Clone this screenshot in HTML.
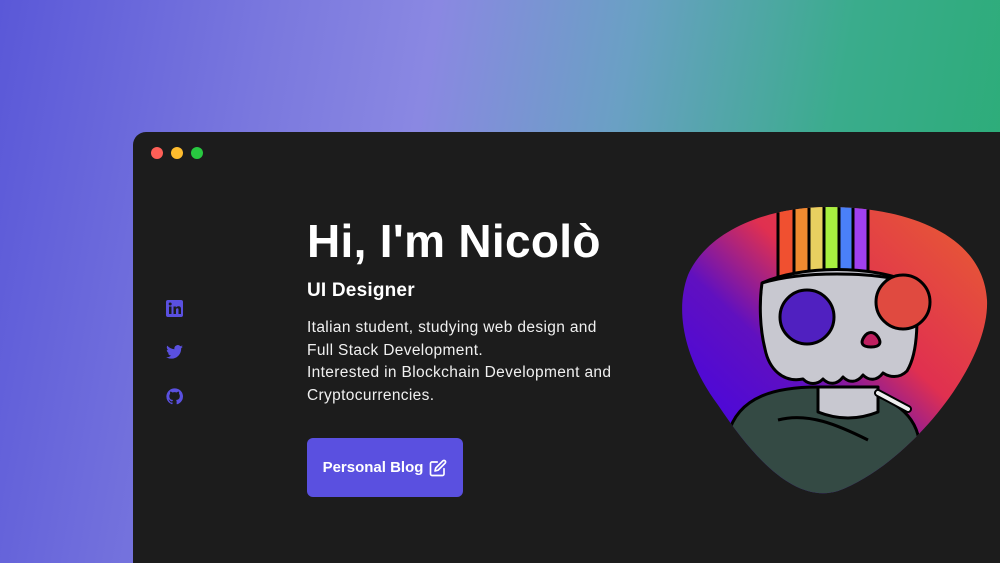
<!DOCTYPE html>
<html><head><meta charset="utf-8"><style>
*{margin:0;padding:0;box-sizing:border-box}
html,body{width:1000px;height:563px;overflow:hidden}
body{position:relative;font-family:"Liberation Sans",sans-serif;
background:linear-gradient(100deg,#5a58d8 0%,#7a78de 25%,#8a88e2 40%,#6aa0c4 58%,#3aac8c 78%,#28ad72 100%);}
.win{position:absolute;left:133px;top:132px;width:880px;height:431px;background:#1c1c1c;border-radius:13px 13px 0 0}
.dot{position:absolute;top:15px;width:12px;height:12px;border-radius:50%}
h1{position:absolute;left:174px;top:82px;color:#fff;font-size:46px;font-weight:700;letter-spacing:0.3px}
h2{position:absolute;left:174px;top:148px;color:#fff;font-size:19px;font-weight:700;letter-spacing:0.2px}
p{position:absolute;left:174px;top:185px;color:#f0f0f0;font-size:15.5px;line-height:22.7px;letter-spacing:0.35px}
.btn{position:absolute;left:174px;top:306px;width:156px;height:59px;background:#5a50e0;border-radius:6px;color:#fff;font-weight:700;font-size:15px;display:flex;align-items:center;justify-content:center;gap:6px}
.ic{position:absolute;left:33px}
</style></head><body>
<div class="win">
<div class="dot" style="left:18px;background:#fe5f57"></div>
<div class="dot" style="left:38px;background:#febc2e"></div>
<div class="dot" style="left:58px;background:#28c840"></div>
<svg class="ic" style="top:168px" width="17" height="17" viewBox="0 0 17 17"><rect width="17" height="17" rx="2" fill="#5a50e0"/><rect x="3" y="6.5" width="2.5" height="7.5" fill="#1c1c1c"/><circle cx="4.2" cy="4" r="1.5" fill="#1c1c1c"/><path d="M7.5 6.5h2.4v1.2c.5-.9 1.5-1.4 2.6-1.4 2 0 2.5 1.3 2.5 3V14h-2.5v-4.2c0-1-.3-1.5-1.1-1.5-.9 0-1.4.6-1.4 1.6V14H7.5z" fill="#1c1c1c"/></svg>
<svg class="ic" style="top:213px" width="17" height="14" viewBox="0 0 24 20"><path d="M24 2.4c-.9.4-1.8.7-2.8.8 1-.6 1.8-1.6 2.200-2.7-1 .6-2 1-3.1 1.2A4.9 4.9 0 0 0 11.9 6 14 14 0 0 1 1.7.9a4.9 4.9 0 0 0 1.5 6.6c-.8 0-1.600-.3-2.2-.6 0 2.4 1.7 4.4 3.9 4.8-.7.2-1.5.2-2.2.1.6 2 2.4 3.4 4.6 3.4A9.9 9.9 0 0 1 0 17.3 14 14 0 0 0 7.5 19.5c9.1 0 14-7.5 14-14v-.6c1-.7 1.8-1.6 2.5-2.5z" fill="#5a50e0"/></svg>
<svg class="ic" style="top:256px" width="17" height="17" viewBox="0 0 24 24"><path d="M12 .5a11.5 11.5 0 0 0-3.6 22.4c.6.1.8-.3.8-.6v-2c-3.2.7-3.9-1.5-3.9-1.5-.5-1.3-1.3-1.7-1.3-1.7-1-.7.1-.7.1-.7 1.2.1 1.8 1.2 1.8 1.2 1 1.8 2.7 1.3 3.4 1 .1-.8.4-1.300.7-1.6-2.6-.3-5.3-1.3-5.3-5.7 0-1.3.5-2.3 1.2-3.1-.1-.3-.5-1.5.1-3.1 0 0 1-.3 3.2 1.2a11 11 0 0 1 5.8 0c2.2-1.5 3.2-1.2 3.2-1.2.6 1.6.2 2.8.1 3.1.7.8 1.2 1.9 1.2 3.1 0 4.4-2.7 5.4-5.3 5.7.4.4.8 1.1.8 2.2v3.2c0 .3.2.7.8.6A11.5 11.5 0 0 0 12 .5z" fill="#5a50e0"/></svg>
<h1>Hi, I'm Nicolò</h1>
<h2>UI Designer</h2>
<p>Italian student, studying web design and<br>Full Stack Development.<br>Interested in Blockchain Development and<br>Cryptocurrencies.</p>
<div class="btn">Personal Blog <svg width="18" height="18" viewBox="0 0 24 24" fill="none" stroke="#fff" stroke-width="2.2" stroke-linecap="round" stroke-linejoin="round"><path d="M11 4H4a2 2 0 0 0-2 2v14a2 2 0 0 0 2 2h14a2 2 0 0 0 2-2v-7"/><path d="M18.5 2.5a2.1 2.1 0 0 1 3 3L12 15l-4 1 1-4z"/></svg></div>
</div>
<svg style="position:absolute;left:678px;top:205px" width="310" height="290" viewBox="0 0 310 290">
<defs><linearGradient id="g" x1="0" y1="1" x2="1" y2="0"><stop offset="0" stop-color="#3a00f0"/><stop offset=".4" stop-color="#6010c0"/><stop offset=".6" stop-color="#e03050"/><stop offset="1" stop-color="#e86030"/></linearGradient>
<clipPath id="c"><path d="M150 2C230 2 305 30 309 95 312 160 230 260 160 286 120 298 80 260 40 200 10 160-5 110 10 70 30 25 90 2 150 2Z"/></clipPath></defs>
<g clip-path="url(#c)">
<rect width="310" height="290" fill="url(#g)"/>
<g stroke="#000" stroke-width="3" stroke-linejoin="round">
<path d="M100 0h16v75h-16z" fill="#f05030"/><path d="M116 0h15v75h-15z" fill="#f08a30"/><path d="M131 0h15v75h-15z" fill="#e8d060"/><path d="M146 0h15v75h-15z" fill="#a8f040"/><path d="M161 0h14v75h-14z" fill="#4a80f8"/><path d="M175 0h15v75h-15z" fill="#a040f0"/>
<path d="M50 230c10-40 50-48 90-48s90 10 100 48v70H50z" fill="#344a44"/>
<path d="M140 182h60v25c-20 8-40 8-60 0z" fill="#c8c8d0"/>
<path d="M84 78c40-18 110-18 150 0 8 30 6 70-5 88-8 8-18 6-24 2-6 8-14 8-20 2-6 8-14 8-20 2-6 8-14 8-20 2-6 6-14 6-20 0-20 4-34-10-38-30-5-20-6-45-3-66z" fill="#c8c8d0"/>
<path d="M84 78c40-12 110-12 150 0" fill="none"/>
<circle cx="129" cy="112" r="27" fill="#5020c0"/>
<circle cx="225" cy="97" r="27" fill="#e04a40"/>
<path d="M186 132c4-6 10-6 14 0 4 6 2 10-7 10s-11-4-7-10z" fill="#c02060"/>
<path d="M200 188l30 16" stroke-width="8" stroke-linecap="round"/>
<path d="M200 188l30 16" stroke="#eee" stroke-width="4" stroke-linecap="round"/>
<path d="M100 215c30-8 60 5 90 20" fill="none"/>
</g></g></svg>
</body></html>
